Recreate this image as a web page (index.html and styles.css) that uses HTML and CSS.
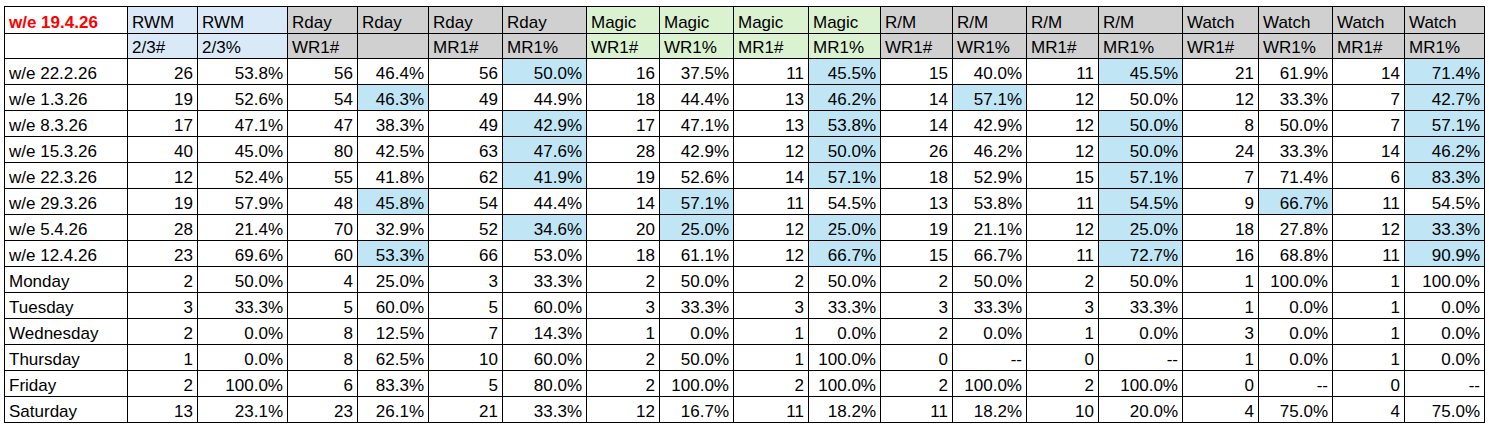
FILE: index.html
```html
<!DOCTYPE html>
<html>
<head>
<meta charset="utf-8">
<link rel="stylesheet" href="styles.css">
</head>
<body>
<table class="sheet">
<colgroup>
<col class="c0"><col class="c70"><col class="c90"><col class="c70"><col class="c71"><col class="c74"><col class="c84">
<col class="c73"><col class="c74"><col class="c75"><col class="c72">
<col class="c72"><col class="c74"><col class="c72"><col class="c84">
<col class="c76"><col class="c74"><col class="c72"><col class="c80">
</colgroup>
<thead>
<tr class="h1">
<th class="title">w/e 19.4.26</th>
<th class="blue">RWM</th><th class="blue">RWM</th>
<th class="gray">Rday</th><th class="gray">Rday</th><th class="gray">Rday</th><th class="gray">Rday</th>
<th class="green">Magic</th><th class="green">Magic</th><th class="green">Magic</th><th class="green">Magic</th>
<th class="gray">R/M</th><th class="gray">R/M</th><th class="gray">R/M</th><th class="gray">R/M</th>
<th class="gray">Watch</th><th class="gray">Watch</th><th class="gray">Watch</th><th class="gray">Watch</th>
</tr>
<tr class="h2">
<th></th>
<th class="blue">2/3#</th><th class="blue">2/3%</th>
<th class="gray">WR1#</th><th class="gray"></th><th class="gray">MR1#</th><th class="gray">MR1%</th>
<th class="green">WR1#</th><th class="green">WR1%</th><th class="green">MR1#</th><th class="green">MR1%</th>
<th class="gray">WR1#</th><th class="gray">WR1%</th><th class="gray">MR1#</th><th class="gray">MR1%</th>
<th class="gray">WR1#</th><th class="gray">WR1%</th><th class="gray">MR1#</th><th class="gray">MR1%</th>
</tr>
</thead>
<tbody>
<tr><td>w/e 22.2.26</td><td>26</td><td>53.8%</td><td>56</td><td>46.4%</td><td>56</td><td class="hl">50.0%</td><td>16</td><td>37.5%</td><td>11</td><td class="hl">45.5%</td><td>15</td><td>40.0%</td><td>11</td><td class="hl">45.5%</td><td>21</td><td>61.9%</td><td>14</td><td class="hl">71.4%</td></tr>
<tr><td>w/e 1.3.26</td><td>19</td><td>52.6%</td><td>54</td><td class="hl">46.3%</td><td>49</td><td>44.9%</td><td>18</td><td>44.4%</td><td>13</td><td class="hl">46.2%</td><td>14</td><td class="hl">57.1%</td><td>12</td><td>50.0%</td><td>12</td><td>33.3%</td><td>7</td><td class="hl">42.7%</td></tr>
<tr><td>w/e 8.3.26</td><td>17</td><td>47.1%</td><td>47</td><td>38.3%</td><td>49</td><td class="hl">42.9%</td><td>17</td><td>47.1%</td><td>13</td><td class="hl">53.8%</td><td>14</td><td>42.9%</td><td>12</td><td class="hl">50.0%</td><td>8</td><td>50.0%</td><td>7</td><td class="hl">57.1%</td></tr>
<tr><td>w/e 15.3.26</td><td>40</td><td>45.0%</td><td>80</td><td>42.5%</td><td>63</td><td class="hl">47.6%</td><td>28</td><td>42.9%</td><td>12</td><td class="hl">50.0%</td><td>26</td><td>46.2%</td><td>12</td><td class="hl">50.0%</td><td>24</td><td>33.3%</td><td>14</td><td class="hl">46.2%</td></tr>
<tr><td>w/e 22.3.26</td><td>12</td><td>52.4%</td><td>55</td><td>41.8%</td><td>62</td><td class="hl">41.9%</td><td>19</td><td>52.6%</td><td>14</td><td class="hl">57.1%</td><td>18</td><td>52.9%</td><td>15</td><td class="hl">57.1%</td><td>7</td><td>71.4%</td><td>6</td><td class="hl">83.3%</td></tr>
<tr><td>w/e 29.3.26</td><td>19</td><td>57.9%</td><td>48</td><td class="hl">45.8%</td><td>54</td><td>44.4%</td><td>14</td><td class="hl">57.1%</td><td>11</td><td>54.5%</td><td>13</td><td>53.8%</td><td>11</td><td class="hl">54.5%</td><td>9</td><td class="hl">66.7%</td><td>11</td><td>54.5%</td></tr>
<tr><td>w/e 5.4.26</td><td>28</td><td>21.4%</td><td>70</td><td>32.9%</td><td>52</td><td class="hl">34.6%</td><td>20</td><td class="hl">25.0%</td><td>12</td><td class="hl">25.0%</td><td>19</td><td>21.1%</td><td>12</td><td class="hl">25.0%</td><td>18</td><td>27.8%</td><td>12</td><td class="hl">33.3%</td></tr>
<tr><td>w/e 12.4.26</td><td>23</td><td>69.6%</td><td>60</td><td class="hl">53.3%</td><td>66</td><td>53.0%</td><td>18</td><td>61.1%</td><td>12</td><td class="hl">66.7%</td><td>15</td><td>66.7%</td><td>11</td><td class="hl">72.7%</td><td>16</td><td>68.8%</td><td>11</td><td class="hl">90.9%</td></tr>
<tr><td>Monday</td><td>2</td><td>50.0%</td><td>4</td><td>25.0%</td><td>3</td><td>33.3%</td><td>2</td><td>50.0%</td><td>2</td><td>50.0%</td><td>2</td><td>50.0%</td><td>2</td><td>50.0%</td><td>1</td><td>100.0%</td><td>1</td><td>100.0%</td></tr>
<tr><td>Tuesday</td><td>3</td><td>33.3%</td><td>5</td><td>60.0%</td><td>5</td><td>60.0%</td><td>3</td><td>33.3%</td><td>3</td><td>33.3%</td><td>3</td><td>33.3%</td><td>3</td><td>33.3%</td><td>1</td><td>0.0%</td><td>1</td><td>0.0%</td></tr>
<tr><td>Wednesday</td><td>2</td><td>0.0%</td><td>8</td><td>12.5%</td><td>7</td><td>14.3%</td><td>1</td><td>0.0%</td><td>1</td><td>0.0%</td><td>2</td><td>0.0%</td><td>1</td><td>0.0%</td><td>3</td><td>0.0%</td><td>1</td><td>0.0%</td></tr>
<tr><td>Thursday</td><td>1</td><td>0.0%</td><td>8</td><td>62.5%</td><td>10</td><td>60.0%</td><td>2</td><td>50.0%</td><td>1</td><td>100.0%</td><td>0</td><td>--</td><td>0</td><td>--</td><td>1</td><td>0.0%</td><td>1</td><td>0.0%</td></tr>
<tr><td>Friday</td><td>2</td><td>100.0%</td><td>6</td><td>83.3%</td><td>5</td><td>80.0%</td><td>2</td><td>100.0%</td><td>2</td><td>100.0%</td><td>2</td><td>100.0%</td><td>2</td><td>100.0%</td><td>0</td><td>--</td><td>0</td><td>--</td></tr>
<tr><td>Saturday</td><td>13</td><td>23.1%</td><td>23</td><td>26.1%</td><td>21</td><td>33.3%</td><td>12</td><td>16.7%</td><td>11</td><td>18.2%</td><td>11</td><td>18.2%</td><td>10</td><td>20.0%</td><td>4</td><td>75.0%</td><td>4</td><td>75.0%</td></tr>
</tbody>
</table>
</body>
</html>
```

FILE: styles.css
```css
html, body {
  margin: 0;
  padding: 0;
  background: #ffffff;
}
body {
  padding: 6px 0 0 4px;
  font-family: "Liberation Sans", Arial, sans-serif;
  font-size: 17px;
  color: #000;
}
.sheet {
  border-collapse: collapse;
  table-layout: fixed;
  width: 1481px;
}
.c0 { width: 123px; }
.c70 { width: 70px; }
.c71 { width: 71px; }
.c72 { width: 72px; }
.c73 { width: 73px; }
.c74 { width: 74px; }
.c75 { width: 75px; }
.c76 { width: 76px; }
.c80 { width: 80px; }
.c84 { width: 84px; }
.c90 { width: 90px; }
.sheet th, .sheet td {
  border: 1px solid #000;
  padding: 0 4px 1px 4px;
  line-height: 19px;
  vertical-align: bottom;
  white-space: nowrap;
  overflow: hidden;
}
.sheet th {
  font-weight: normal;
  text-align: left;
}
.sheet td {
  text-align: right;
  height: 24px;
}
.sheet td:first-child {
  text-align: left;
}
.h1 th { height: 25px; }
.h2 th { height: 23px; }
.sheet th.title {
  color: #ff0000;
  font-weight: bold;
}
.blue { background: #dae9f8; }
.gray { background: #d0d0d0; }
.green { background: #daf2d0; }
.hl { background: #c0e6f5; }
```
